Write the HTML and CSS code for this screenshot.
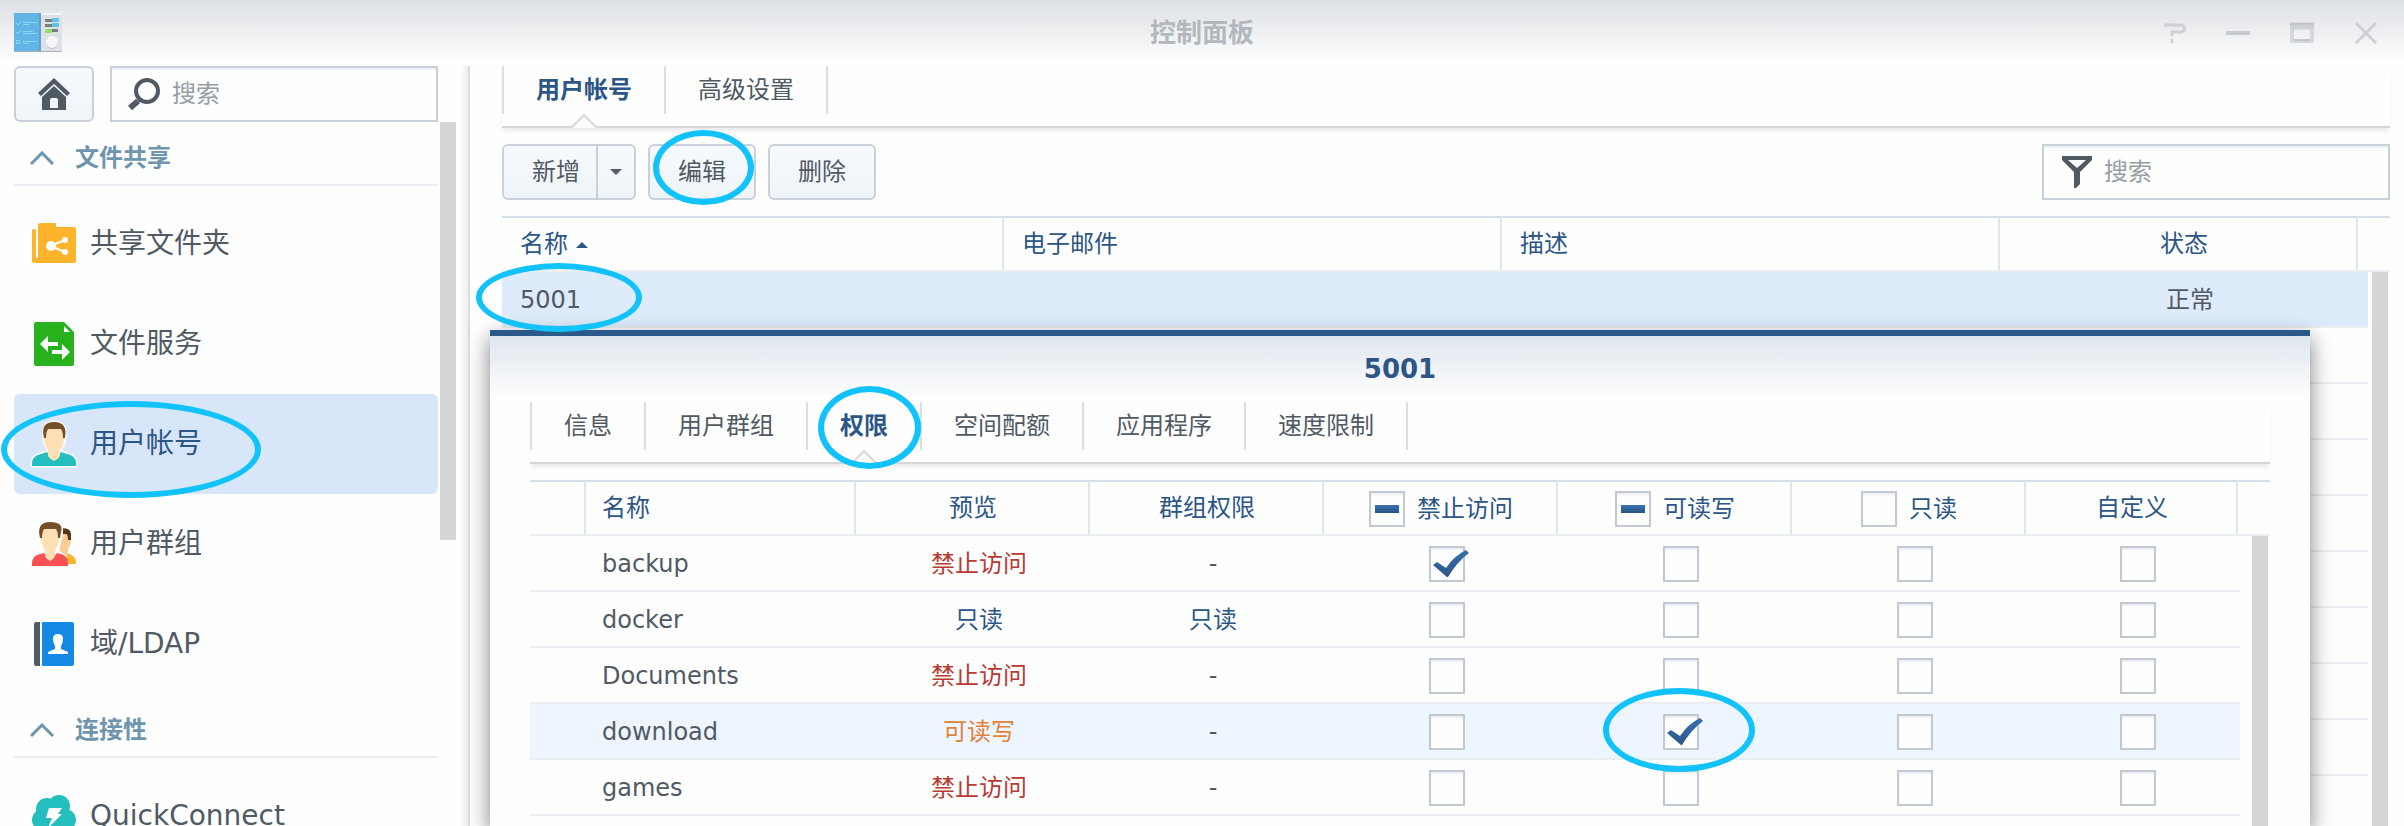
FILE: index.html
```html
<!doctype html>
<html lang="zh-CN">
<head>

<meta charset="utf-8">

<title>控制面板</title>

<link rel="stylesheet" href="styles.css">

</head>
<body>

<header class="titlebar">
	<svg class="app-icon" width="48" height="40" viewBox="0 0 48 40">
		<rect x="0" y="0" width="48" height="39" rx="1" fill="#a9afb5"/>
		<rect x="27" y="0" width="21" height="38" fill="#dde1e5"/>
		<rect x="27" y="0" width="21" height="2" fill="#f2f4f6"/>
		<rect x="0" y="0" width="27" height="38" fill="#64b5e6"/>
		<rect x="25" y="0" width="2" height="38" fill="#5f9fd3"/>
		<g fill="none" stroke="#7fdcfb" stroke-width="1">
			<path d="M2 10l2 2 3-4M2 19l2 2 3-4M2.500 27.500h3v3h-3z"/>
			<path d="M9 9.500h14M9 11.500h6M9 18.500h10M9 20.500h14M9 28.500h14M9 30.500h6"/>
		</g>
		<g fill="#7a7f84">
			<rect x="31" y="6" width="8" height="3"/>
			<rect x="31" y="11" width="8" height="3"/>
			<rect x="37" y="16" width="7" height="3"/>
		</g>
		<rect x="38" y="5" width="7" height="4" rx="1" fill="#5dc3ea"/>
		<rect x="38" y="10" width="7" height="4" rx="1" fill="#5dc3ea"/>
		<rect x="31" y="16" width="7" height="4" rx="1" fill="#95dc6c"/>
		<circle cx="38" cy="30" r="6" fill="#bfc5cb"/>
		<circle cx="38" cy="29" r="6" fill="#f5f7f9"/>
	</svg>
	<h1>控制面板</h1>
	<div class="window-controls">
		<button type="button" aria-label="帮助">
			<svg width="24" height="22" viewBox="0 0 24 22"><path d="M2 3h17a3 3 0 0 1 0 7H10v4M10 17v4" fill="none" stroke="#cdd0d4" stroke-width="3"/></svg>
		</button>
		<button type="button" aria-label="最小化">
			<svg width="24" height="22" viewBox="0 0 24 22"><path d="M0 11h24" stroke="#c6c9cd" stroke-width="4"/></svg>
		</button>
		<button type="button" aria-label="最大化">
			<svg width="24" height="22" viewBox="0 0 24 22"><path d="M2 3v16h20V3" fill="none" stroke="#d5d8dc" stroke-width="4"/><path d="M0 4h24" stroke="#ced1d5" stroke-width="7"/><path d="M0 2h24M4 18h16" stroke="#c2c5c9" stroke-width="2"/></svg>
		</button>
		<button type="button" aria-label="关闭">
			<svg width="24" height="22" viewBox="0 0 24 22"><path d="M2 1l20 20M22 1L2 21" stroke="#cdd0d4" stroke-width="3"/></svg>
		</button>
	</div>
</header>

<div class="panel">
	<aside class="sidebar">
		<div class="sidebar-tools">
			<button type="button" class="btn btn--home" aria-label="主页">
				<svg width="32" height="32" viewBox="0 0 32 32" fill="#505a64">
					<path d="M16 0l16 15-3 3L16 6 3 18l-3-3z"/>
					<path d="M16 8l12 11v13H4V19z"/>
					<path d="M12 30v-8a2 2 0 0 1 2-2h4a2 2 0 0 1 2 2v8z" fill="#f3f7fb"/>
				</svg>
			</button>
			<label class="search">
				<svg width="32" height="32" viewBox="0 0 32 32" fill="none" stroke="#505a64">
					<circle cx="19" cy="13" r="11" stroke-width="4"/>
					<path d="M11 21l2 2" stroke-width="4"/>
					<path d="M10 23l-8 7" stroke-width="6"/>
				</svg>
				<input type="text" placeholder="搜索" aria-label="搜索">
			</label>
		</div>

		<nav class="menu">
			<h2><svg width="24" height="14" viewBox="0 0 24 14"><path d="M1 13L12 2l11 11" fill="none" stroke="#6f95ae" stroke-width="3"/></svg>文件共享</h2>
			<ul>
				<li><a href="#share">
					<svg width="44" height="44" viewBox="0 0 44 44">
						<path d="M2 8h1v28h3V2h1q0-1 1-1h15q1 0 1 1v3h18q2 0 2 2v32q0 2-2 2H2q-2 0-2-2V8z" fill="#fdb32b"/>
						<path d="M4 4h2v31H4z" fill="#fff"/>
						<path d="M0 0h6v7H0z" fill="#fefefe"/>
						<path d="M0 9q0-2 2-2t2 2v30H0z" fill="#fdb32b"/>
						<path d="M18 24l15-6M18 24l15 6" stroke="#fff" stroke-width="2"/>
						<circle cx="19" cy="24" r="5" fill="#fff"/><circle cx="33" cy="18" r="3" fill="#fff"/><circle cx="33" cy="30" r="3" fill="#fff"/>
					</svg>
					共享文件夹
				</a></li>
				<li><a href="#service">
					<svg width="44" height="44" viewBox="0 0 44 44">
						<path d="M4 0h28l10 10v32q0 2-2 2H4q-2 0-2-2V2q0-2 2-2z" fill="#27b11d"/>
						<path d="M32 4v6h6z" fill="#fff"/>
						<path d="M8 22l8-8v6h10v4H16v6zM38 30l-8-8v6H20v4h10v6z" fill="#fff"/>
					</svg>
					文件服务
				</a></li>
				<li class="--active"><a href="#user">
					<svg width="48" height="48" viewBox="-2 -2 48 48">
						<g stroke="#fff" stroke-width="3" stroke-linejoin="round">
							<path d="M0 44v-3q0-7 9-9l7-2h12l7 2q9 2 9 9v3z"/><path d="M12 14Q10 0 22 0t11 14q0 8-4 12v8l-7 5-6-5v-8q-5-6-4-12z"/>
						</g>
						<path d="M0 44v-3q0-7 9-9l6-2q7 12 14 0l6 2q9 2 9 9v3z" fill="#23bebe"/>
						<path d="M13 11q0-6 9-6t10 6v5q0 7-4 12v5q0 3-6 6-6-3-6-6v-5q-4-6-4-12z" fill="#ffdfb3"/>
						<path d="M12 16Q8 0 22 0t11 16h-2q0-6-2-9H16q-2 3-2 9z" fill="#744f29"/>
					</svg>
					用户帐号
				</a><span class="mark mark--menu"></span></li>
				<li><a href="#group">
					<svg width="44" height="44" viewBox="0 0 44 44">
						<path d="M36 42q0-6-5-8l4-3q9 3 9 9v2z" fill="#fdb32b"/>
						<path d="M30 10h7q2 0 2 5 0 8-3 12v6q-3 0-9-4z" fill="#f9cd94"/>
						<path d="M30 6q9 0 9 6v6h-3q0-6-2-6h-5z" fill="#54391c"/>
						<path d="M27 0q5 4 2 16l-3 13 9 6" fill="none" stroke="#fff" stroke-width="2"/>
						<path d="M0 44v-3q0-7 8-9l4-1q6 11 13 0l4 1q7 2 7 9v3z" fill="#fa5053"/>
						<path d="M9 11q0-6 9-6t9 6v5q0 7-4 12v5q0 3-5 6-5-3-5-6v-5q-4-6-4-12z" fill="#ffdfb3"/>
						<path d="M8 16Q4 0 18 0t11 10l-1 6h-2q0-6-2-9H12q-2 3-2 9z" fill="#744f29"/>
					</svg>
					用户群组
				</a></li>
				<li><a href="#ldap">
					<svg width="44" height="44" viewBox="0 0 44 44">
						<path d="M4 0h4v44H4q-2 0-2-2V2q0-2 2-2z" fill="#505a64"/>
						<path d="M10 0h30q2 0 2 2v40q0 2-2 2H10z" fill="#1689e5"/>
						<path d="M16 32v-2l7-3v-3q-2-3-2-7 0-5 5-5t5 5q0 4-2 7v3l7 3v2z" fill="#fff"/>
					</svg>
					域/LDAP
				</a></li>
			</ul>
			<h2><svg width="24" height="14" viewBox="0 0 24 14"><path d="M1 13L12 2l11 11" fill="none" stroke="#6f95ae" stroke-width="3"/></svg>连接性</h2>
			<ul>
				<li><a href="#quickconnect">
					<svg width="44" height="44" viewBox="0 0 44 44">
						<g fill="#23bebe"><circle cx="15" cy="15" r="11"/><circle cx="27" cy="12" r="11"/><circle cx="11" cy="26" r="11"/><circle cx="33" cy="26" r="11"/><rect x="11" y="15" width="22" height="22"/></g>
						<path d="M17 14h13l-4 6h4L16 34l4-10h-6z" fill="#fff"/>
					</svg>
					QuickConnect
				</a></li>
			</ul>
		</nav>
		<div class="scrollbar scrollbar--menu"></div>
	</aside>

	<main class="main">
		<div class="tabs">
			<button type="button" class="tab --current">用户帐号<svg class="notch" width="28" height="16" viewBox="0 0 28 16"><path d="M0 15h2L14 3l12 12h2v1H0z" fill="#fbfbfb"/><path d="M0 15h2L14 3l12 12h2" fill="none" stroke="#d8d8d8" stroke-width="2"/></svg></button>
			<button type="button" class="tab">高级设置</button>
		</div>

		<div class="toolbar">
			<div class="split">
				<button type="button" class="btn btn--add">新增</button>
				<button type="button" class="btn btn--more" aria-label="更多"><svg width="12" height="6" viewBox="0 0 12 6"><path d="M0 0h12L6 6z" fill="#505a64"/></svg></button>
			</div>
			<div class="marked">
				<button type="button" class="btn">编辑</button>
				<span class="mark mark--edit"></span>
			</div>
			<button type="button" class="btn">删除</button>
			<label class="search search--filter">
				<svg width="30" height="32" viewBox="0 0 30 32"><path d="M0 0h30v4L18 16v12l-4 4h-2V16L0 4z" fill="#505a64"/><path d="M6 4h18l-9 8z" fill="#fff"/></svg>
				<input type="text" placeholder="搜索" aria-label="搜索用户">
			</label>
		</div>

		<div class="grid">
			<table>
				<colgroup>
					<col class="col--name"><col><col><col class="col--status"><col class="col--gutter">
				</colgroup>
				<thead>
					<tr><th>名称 <svg class="sort" width="12" height="6" viewBox="0 0 12 6"><path d="M0 6L6 0l6 6z" fill="#2b5686"/></svg></th><th>电子邮件</th><th>描述</th><th class="center status">状态</th><th></th></tr>
				</thead>
				<tbody>
					<tr class="--selected"><td>5001<span class="mark mark--name"></span></td><td></td><td></td><td class="center status">正常</td><td></td></tr>
					<tr><td></td><td></td><td></td><td></td><td></td></tr>
					<tr><td></td><td></td><td></td><td></td><td></td></tr>
					<tr><td></td><td></td><td></td><td></td><td></td></tr>
					<tr><td></td><td></td><td></td><td></td><td></td></tr>
					<tr><td></td><td></td><td></td><td></td><td></td></tr>
					<tr><td></td><td></td><td></td><td></td><td></td></tr>
					<tr><td></td><td></td><td></td><td></td><td></td></tr>
					<tr><td></td><td></td><td></td><td></td><td></td></tr>
				</tbody>
			</table>
			<div class="gutter"><div class="scrollbar"></div></div>
		</div>

		<section class="dialog" role="dialog" aria-labelledby="dialog-title">
			<h2 id="dialog-title">5001</h2>

			<div class="tabs">
				<button type="button" class="tab">信息</button>
				<button type="button" class="tab">用户群组</button>
				<button type="button" class="tab --current">权限<svg class="notch" width="28" height="16" viewBox="0 0 28 16"><path d="M0 15h2L14 3l12 12h2v1H0z" fill="#fbfbfb"/><path d="M0 15h2L14 3l12 12h2" fill="none" stroke="#d8d8d8" stroke-width="2"/></svg><span class="mark mark--tab"></span></button>
				<button type="button" class="tab">空间配额</button>
				<button type="button" class="tab">应用程序</button>
				<button type="button" class="tab">速度限制</button>
			</div>

			<div class="grid grid--rights">
				<table>
					<colgroup>
						<col class="col--lead"><col><col class="col--right"><col class="col--right"><col class="col--right"><col class="col--right"><col class="col--right"><col class="col--custom"><col class="col--gutter">
					</colgroup>
					<thead>
						<tr>
							<th></th>
							<th>名称</th>
							<th class="center">预览</th>
							<th class="center">群组权限</th>
							<th class="center"><label><input type="checkbox" class="partial">禁止访问</label></th>
							<th class="center"><label><input type="checkbox" class="partial">可读写</label></th>
							<th class="center"><label><input type="checkbox">只读</label></th>
							<th class="center">自定义</th>
							<th></th>
						</tr>
					</thead>
					<tbody>
						<tr>
							<td></td><td>backup</td><td class="center deny">禁止访问</td><td class="center">-</td>
							<td class="center"><input type="checkbox" aria-label="backup 禁止访问" checked></td>
							<td class="center"><input type="checkbox" aria-label="backup 可读写"></td>
							<td class="center"><input type="checkbox" aria-label="backup 只读"></td>
							<td class="center"><input type="checkbox" aria-label="backup 自定义"></td>
							<td></td>
						</tr>
						<tr>
							<td></td><td>docker</td><td class="center read">只读</td><td class="center read">只读</td>
							<td class="center"><input type="checkbox" aria-label="docker 禁止访问"></td>
							<td class="center"><input type="checkbox" aria-label="docker 可读写"></td>
							<td class="center"><input type="checkbox" aria-label="docker 只读"></td>
							<td class="center"><input type="checkbox" aria-label="docker 自定义"></td>
							<td></td>
						</tr>
						<tr>
							<td></td><td>Documents</td><td class="center deny">禁止访问</td><td class="center">-</td>
							<td class="center"><input type="checkbox" aria-label="Documents 禁止访问"></td>
							<td class="center"><input type="checkbox" aria-label="Documents 可读写"></td>
							<td class="center"><input type="checkbox" aria-label="Documents 只读"></td>
							<td class="center"><input type="checkbox" aria-label="Documents 自定义"></td>
							<td></td>
						</tr>
						<tr class="--hover">
							<td></td><td>download</td><td class="center write">可读写</td><td class="center">-</td>
							<td class="center"><input type="checkbox" aria-label="download 禁止访问"></td>
							<td class="center"><input type="checkbox" aria-label="download 可读写" checked><span class="mark mark--check"></span></td>
							<td class="center"><input type="checkbox" aria-label="download 只读"></td>
							<td class="center"><input type="checkbox" aria-label="download 自定义"></td>
							<td></td>
						</tr>
						<tr>
							<td></td><td>games</td><td class="center deny">禁止访问</td><td class="center">-</td>
							<td class="center"><input type="checkbox" aria-label="games 禁止访问"></td>
							<td class="center"><input type="checkbox" aria-label="games 可读写"></td>
							<td class="center"><input type="checkbox" aria-label="games 只读"></td>
							<td class="center"><input type="checkbox" aria-label="games 自定义"></td>
							<td></td>
						</tr>
					</tbody>
				</table>
				<div class="gutter"><div class="scrollbar"></div></div>
			</div>
		</section>
	</main>
</div>

<script>
// the mixed state can only be set from script
document.querySelectorAll( '.partial' ).forEach( function( el ) {
	el.indeterminate = true;
} );
</script>

</body>
</html>
```
FILE: styles.css
```css
* {
	box-sizing: border-box;
}

body {
	display: flex;
	flex-direction: column;
	height: 100vh;
	margin: 0;
	overflow: hidden;
	background: #fefefe;
	color: #505a64;
	font: 24px/36px "DejaVu Sans", "Noto Sans CJK SC", sans-serif;
}

h1,
h2,
ul {
	margin: 0;
	padding: 0;
	list-style: none;
	font-size: 24px;
}

svg {
	display: block;
	flex: none;
}

button,
input {
	margin: 0;
	color: inherit;
	font: inherit;
}

/* title bar */

.titlebar {
	display: grid;
	grid-template-columns: 1fr auto 1fr;
	align-items: center;
	height: 66px;
	padding: 0 14px;
	background: linear-gradient(#dcdfe4, #fefefe 62px);
}

.titlebar h1 {
	color: #b3b8be;
	font-size: 26px;
}

.window-controls {
	display: flex;
	justify-content: flex-end;
	gap: 40px;
	padding-right: 12px;
}

.window-controls button {
	padding: 0;
	border: 0;
	background: none;
}

.panel {
	display: flex;
	flex: 1;
	min-height: 0;
}

/* sidebar */

.sidebar {
	position: relative;
	flex: none;
	width: 470px;
	padding: 0 30px 0 14px;
	border-right: 2px solid #dcdde0;
	background: linear-gradient(to left, #eeeef0, #fefefe 8px);
}

.sidebar-tools {
	display: flex;
	gap: 16px;
}

.btn {
	height: 56px;
	padding: 0 28px;
	border: 2px solid #c8d1d9;
	border-radius: 6px;
	background: linear-gradient(#f6fafe, #eff4f8);
}

.btn--home {
	display: flex;
	flex: none;
	align-items: center;
	justify-content: center;
	width: 80px;
	padding: 0;
}

.search {
	display: flex;
	flex: 1;
	align-items: center;
	gap: 12px;
	min-width: 0;
	height: 56px;
	padding: 0 16px;
	border: 2px solid #c8d1d9;
	background: #fefefe;
	box-shadow: inset 0 2px #eff2f5;
}

.search input {
	flex: 1;
	min-width: 0;
	padding: 0;
	border: 0;
	background: none;
}

.search input::placeholder {
	color: #969da4;
}

.menu h2 {
	display: flex;
	align-items: center;
	gap: 21px;
	height: 64px;
	padding: 10px 16px 0;
	margin-bottom: 8px;
	border-bottom: 2px solid #e9eef2;
	color: #6f95ae;
}

.menu li {
	position: relative;
	height: 100px;
	border-radius: 6px;
}

.menu a {
	display: flex;
	align-items: center;
	gap: 14px;
	height: 100%;
	padding-left: 18px;
	color: inherit;
	font-size: 28px;
	text-decoration: none;
}

.menu .--active {
	background: #d7e6f8;
	color: #2b5686;
}

.menu .--active a {
	gap: 12px;
	padding-left: 16px;
}

.scrollbar {
	width: 16px;
	height: 100%;
	background: #d3d5d7;
}

.scrollbar--menu {
	position: absolute;
	top: 56px;
	right: 12px;
	height: 55%;
}

/* tabs */

.main {
	position: relative;
	flex: 1;
	min-width: 0;
	padding: 0 14px 0 32px;
}

.tabs {
	display: flex;
	align-items: flex-start;
	height: 62px;
	border-bottom: 2px solid #d6d7d8;
	box-shadow: 0 4px 4px -1px #ececec;
}

.tab {
	position: relative;
	height: 48px;
	padding: 0 32px;
	border: 0;
	border-left: 2px solid #d6e0e8;
	background: none;
}

.tab:last-child {
	border-right: 2px solid #d6e0e8;
}

.tab.--current {
	color: #2b5686;
	font-weight: bold;
}

.notch {
	position: absolute;
	bottom: -14px;
	left: calc(50% - 14px);
}

/* toolbar */

.toolbar {
	display: flex;
	gap: 12px;
	padding: 16px 0;
}

.split {
	display: flex;
}

.btn--add {
	padding-right: 16px;
	border-radius: 6px 0 0 6px;
}

.btn--more {
	padding: 0 12px;
	border-left: 0;
	border-radius: 0 6px 6px 0;
}

.marked {
	position: relative;
}

.search--filter {
	flex: none;
	width: 348px;
	padding: 0 18px;
	margin-left: auto;
}

/* tables */

.grid {
	position: relative;
}

table {
	width: 100%;
	table-layout: fixed;
	border-spacing: 0;
}

th,
td {
	position: relative;
	height: 56px;
	padding: 0 18px;
	border-bottom: 2px solid #e9eef2;
	font-weight: normal;
	text-align: left;
	white-space: nowrap;
}

td {
	padding-top: 2px;
}

th {
	border-top: 2px solid #d6e0e8;
	border-right: 2px solid #e0e8ef;
	color: #2b5686;
}

th:last-child {
	border-right: 0;
}

.grid--rights th,
.grid--rights td {
	padding-left: 16px;
}

.grid .center {
	padding-right: 0;
	padding-left: 2px;
	text-align: center;
}

.grid td.center {
	padding-left: 12px;
}

.grid .status {
	padding-left: 12px;
}

.grid td.status {
	padding-left: 22px;
}

.col--name {
	width: 502px;
}

.col--status {
	width: 358px;
}

.col--gutter {
	width: 32px;
}

.col--lead {
	width: 56px;
}

.col--right {
	width: 234px;
}

.col--custom {
	width: 212px;
}

.sort {
	display: inline-block;
	vertical-align: middle;
}

.--selected td {
	background: #deebfb;
}

.--hover td {
	background: #edf5fe;
}

.deny {
	color: #b93a30;
}

.read {
	color: #2b5686;
}

.write {
	color: #e0813c;
}

/* covers the end of the rows, below the header */
.gutter {
	position: absolute;
	top: 56px;
	right: 0;
	width: 22px;
	height: 100vh;
	padding: 0 2px 0 4px;
	background: #fefefe;
}

.grid--rights .gutter {
	width: 30px;
	padding-left: 12px;
}

th label {
	display: inline-flex;
	align-items: center;
	gap: 12px;
	vertical-align: middle;
}

input[type="checkbox"] {
	position: relative;
	display: block;
	width: 36px;
	height: 36px;
	border: 2px solid #c2c9d2;
	background: #fefefe;
	box-shadow: inset 0 2px 2px #eef0f2;
	appearance: none;
}

td input[type="checkbox"] {
	margin: 0 auto;
}

input[type="checkbox"]:checked::after {
	content: "";
	position: absolute;
	top: -2px;
	left: -2px;
	width: 42px;
	height: 36px;
	background: linear-gradient(#3b72b4, #285382);
	clip-path: path("M4 19L8 16L17 22Q25 10 37 4L40 7Q28 16 19 31L18 31Z");
}

input[type="checkbox"]:indeterminate::after {
	content: "";
	position: absolute;
	top: 12px;
	left: 4px;
	width: 24px;
	height: 8px;
	background: linear-gradient(#3b72b4, #285382);
}

/* dialog */

.dialog {
	position: absolute;
	z-index: 10;
	top: 264px;
	right: 94px;
	bottom: 0;
	left: 20px;
	padding: 0 40px;
	border-top: 6px solid #2b5a8a;
	background: linear-gradient(#dfe6ee, #fefefe 62px);
	box-shadow: 0 8px 20px rgba(0, 0, 0, 0.5);
}

.dialog h2 {
	height: 66px;
	color: #2b5686;
	font-size: 26px;
	line-height: 66px;
	text-align: center;
}

.dialog .tabs {
	margin-bottom: 16px;
}

/* hand-drawn rings */

.mark {
	position: absolute;
	z-index: 20;
	border: 6px solid #12c2fb;
	border-radius: 50%;
	pointer-events: none;
}

.mark--menu {
	top: 7px;
	left: -13px;
	width: 260px;
	height: 97px;
}

.mark--edit {
	top: -14px;
	left: 5px;
	width: 101px;
	height: 75px;
}

.mark--name {
	top: -9px;
	left: -26px;
	width: 166px;
	height: 69px;
}

.mark--tab {
	top: -16px;
	left: 10px;
	width: 103px;
	height: 83px;
}

.mark--check {
	top: -16px;
	left: 45px;
	width: 152px;
	height: 84px;
}
```
